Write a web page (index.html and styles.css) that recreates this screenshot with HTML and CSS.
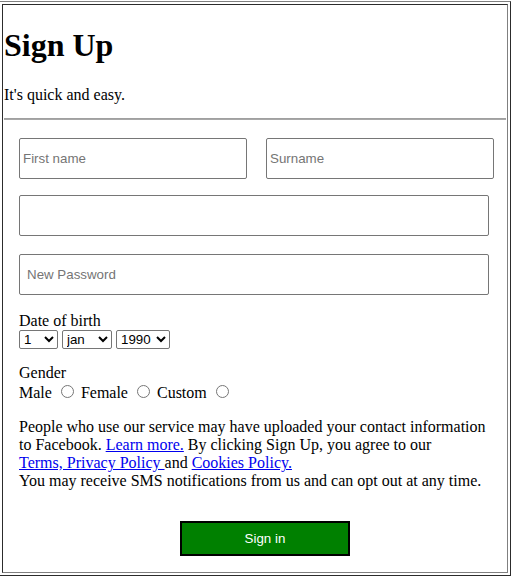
FILE: index.html
```html
<!DOCTYPE html>
<html>
<head>
<meta charset="utf-8">
<title>Sign Up</title>
<link rel="stylesheet" href="styles.css">
</head>
<body>
<div class="frame">
  <div class="cell">
    <h1 class="title">Sign Up</h1>
    <p class="sub">It's quick and easy.</p>
    <hr class="divider">
    <form class="form">
      <div class="name-row">
        <input class="input half" type="text" placeholder="First name">
        <input class="input half" type="text" placeholder="Surname">
      </div>
      <input class="input full email" type="text">
      <input class="input full password" type="password" placeholder="New Password">
      <div class="dob">
        <div class="label">Date of birth</div>
        <div class="selects">
          <select class="sel day"><option>1</option><option>2</option><option>3</option><option>31</option></select>
          <select class="sel month"><option>jan</option><option>feb</option><option>mar</option><option>may</option></select>
          <select class="sel year"><option>1990</option><option>1991</option><option>1992</option></select>
        </div>
      </div>
      <div class="gender">
        <div class="label">Gender</div>
        <div class="radios">Male <input class="radio" type="radio" name="g"> Female <input class="radio" type="radio" name="g"> Custom <input class="radio" type="radio" name="g"></div>
      </div>
      <p class="terms">People who use our service may have uploaded your contact information to Facebook. <a href="#">Learn more.</a> By clicking Sign Up, you agree to our<br><a href="#">Terms, Privacy Policy </a>and <a href="#">Cookies Policy.</a><br>You may receive SMS notifications from us and can opt out at any time.</p>
      <button class="submit" type="button">Sign in</button>
    </form>
  </div>
</div>
</body>
</html>
```
FILE: styles.css
```css
html, body {
  margin: 0;
  padding: 0;
  background: #fff;
}
body {
  font-family: "Liberation Serif", "Times New Roman", serif;
  font-size: 16px;
  color: #000;
}
.frame {
  box-sizing: border-box;
  width: 512px;
  height: 575px;
  margin: 1px 0 0 -1px;
  border: 1px outset grey;
  padding: 2px;
}
.cell {
  box-sizing: border-box;
  height: 100%;
  border: 1px inset grey;
  padding: 1px;
}
.title {
  font-size: 32px;
  font-weight: bold;
  margin: 21.44px 0;
}
.sub {
  margin: 16px 0 14px 0;
}
.divider {
  margin: 0 0 8px 0;
  border: 0;
  border-top: 1px solid #a0a0a0;
  border-bottom: 1px solid #a8a8a8;
  height: 0;
}
.form {
  padding: 10px 15px 0 15px;
  margin: 0;
}
.name-row {
  display: flex;
  gap: 19px;
}
.input {
  box-sizing: border-box;
  display: block;
  height: 41px;
  margin: 0;
  border: 1px solid #767676;
  border-radius: 2px;
  padding: 0 3px;
  font-family: "Liberation Sans", Arial, sans-serif;
  font-size: 13.33px;
  color: #000;
  background: #fff;
}
.input::placeholder {
  color: #757575;
}
.half {
  flex: none;
  width: 228px;
}
.full {
  width: 470px;
}
.email {
  margin-top: 16px;
}
.password {
  margin-top: 18px;
  padding-left: 7px;
}
.dob {
  margin-top: 17px;
}
.selects {
  height: 20px;
  padding-top: 0;
}
.sel {
  box-sizing: border-box;
  height: 19px;
  margin: 0;
  font-family: "Liberation Sans", Arial, sans-serif;
  font-size: 13.33px;
  border: 1px solid #767676;
  border-radius: 2px;
  background: #fff;
  color: #000;
  vertical-align: top;
}
.day { width: 39px; }
.month { width: 50px; }
.year { width: 54px; }
.gender {
  margin-top: 14px;
}
.radio {
  margin: 3px 3px 0 5px;
}
.terms {
  margin: 16px 0 0 0;
}
.submit {
  display: block;
  box-sizing: border-box;
  width: 170px;
  height: 35px;
  margin: 31px 0 0 161px;
  border: 2px solid #000;
  background: #008000;
  color: #fff;
  font-family: "Liberation Sans", Arial, sans-serif;
  font-size: 13.33px;
  padding: 0;
}
```
